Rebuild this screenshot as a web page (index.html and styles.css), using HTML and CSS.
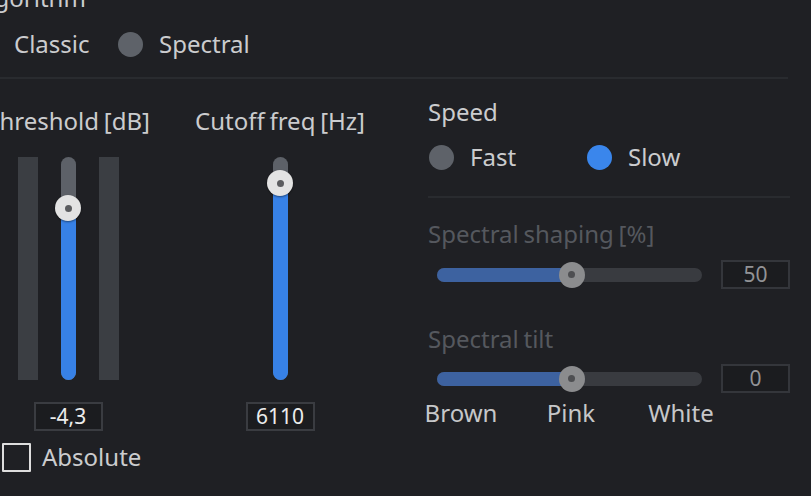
FILE: index.html
```html
<!DOCTYPE html>
<html lang="en">
<head>
<meta charset="utf-8">
<title>Noise reduction</title>
<link rel="stylesheet" href="styles.css">
</head>
<body>
<div class="panel">
  <section class="algo">
    <div class="label">Algorithm</div>
    <div class="radios algo-radios">
      <div class="radio"><span class="dot"></span>Classic</div>
      <div class="radio"><span class="dot"></span>Spectral</div>
    </div>
  </section>
  <div class="divider wide"></div>
  <div class="main">
    <div class="left">
      <div class="faders">
        <div class="fader-col">
          <div class="label nowrap">Threshold [dB]</div>
          <div class="fader-area">
            <div class="meter"></div>
            <div class="vtrack">
              <div class="vfill" style="height:172px"></div>
              <div class="vthumb" style="bottom:159px"></div>
            </div>
            <div class="meter"></div>
          </div>
          <div class="valbox">-4,3</div>
        </div>
        <div class="fader-col">
          <div class="label nowrap">Cutoff freq [Hz]</div>
          <div class="fader-area">
            <div class="vtrack">
              <div class="vfill" style="height:197px"></div>
              <div class="vthumb" style="bottom:184px"></div>
            </div>
          </div>
          <div class="valbox">6110</div>
        </div>
      </div>
      <div class="check"><span class="cbox"></span>Absolute</div>
    </div>
    <div class="right">
      <div class="label">Speed</div>
      <div class="radios speed-radios">
        <div class="radio"><span class="dot"></span>Fast</div>
        <div class="radio"><span class="dot on"></span>Slow</div>
      </div>
      <div class="divider"></div>
      <div class="label dim first-dim">Spectral shaping [%]</div>
      <div class="hrow">
        <div class="htrack">
          <div class="hfill" style="width:50.8%"></div>
          <div class="hthumb" style="left:50.8%"></div>
        </div>
        <div class="valbox dimbox">50</div>
      </div>
      <div class="label dim second-dim">Spectral tilt</div>
      <div class="hrow tight">
        <div class="htrack">
          <div class="hfill" style="width:50.8%"></div>
          <div class="hthumb" style="left:50.8%"></div>
        </div>
        <div class="valbox dimbox">0</div>
      </div>
      <div class="ticks">
        <span>Brown</span><span>Pink</span><span>White</span>
      </div>
    </div>
  </div>
</div>
</body>
</html>
```

FILE: styles.css
```css
html, body {
  margin: 0;
  padding: 0;
}
body {
  background: #1f2024;
  font-family: "Noto Sans", "Open Sans", sans-serif;
  font-size: 24px;
  line-height: 32px;
  word-spacing: -1.5px;
  color: #cbccce;
  width: 811px;
  height: 496px;
  overflow: hidden;
}
.panel {
  margin-left: -27px;
  position: relative;
  top: -18px;
}
.label {
  height: 32px;
}
.nowrap {
  white-space: nowrap;
}
.radios {
  display: grid;
}
.algo-radios {
  grid-template-columns: 145px auto;
  margin-top: 14px;
}
.radio {
  display: flex;
  align-items: center;
  gap: 16px;
  height: 32px;
}
.dot {
  flex: none;
  width: 25px;
  height: 25px;
  border-radius: 50%;
  background: #5e6269;
}
.dot.on {
  background: #3a86ec;
}
.divider {
  height: 2px;
  background: #292b2f;
}
.divider.wide {
  width: 815px;
  margin-top: 17px;
}
.main {
  display: flex;
}
.left {
  width: 455px;
  padding-top: 26px;
}
.right {
  width: 362px;
  padding-top: 17px;
}
.faders {
  display: grid;
  grid-template-columns: 190px 234px;
}
.fader-col {
  display: flex;
  flex-direction: column;
  align-items: center;
}
.fader-area {
  display: flex;
  gap: 23px;
  height: 223px;
  margin-top: 20px;
}
.meter {
  width: 20px;
  background: #3b3e43;
}
.vtrack {
  position: relative;
  width: 15px;
  border-radius: 8px;
  background: #5d6168;
}
.vfill {
  position: absolute;
  left: 0;
  right: 0;
  bottom: 0;
  background: #3781e6;
  border-radius: 0 0 8px 8px;
}
.vthumb,
.hthumb {
  position: absolute;
  width: 26px;
  height: 26px;
  border-radius: 50%;
  display: flex;
  align-items: center;
  justify-content: center;
}
.vthumb {
  left: 50%;
  margin-left: -13px;
  background: #e3e3e3;
  box-shadow: 0 1px 2px rgba(0, 0, 0, 0.45);
}
.vthumb::after,
.hthumb::after {
  content: "";
  width: 7px;
  height: 7px;
  border-radius: 50%;
  background: #5b5c5f;
}
.valbox {
  box-sizing: border-box;
  width: 69px;
  height: 29px;
  margin-top: 22px;
  border: 2px solid #3a3c41;
  background: #1b1c1f;
  font-size: 21px;
  line-height: 25px;
  text-align: center;
  color: #ececec;
}
.check {
  display: flex;
  align-items: center;
  gap: 11px;
  height: 32px;
  margin-top: 10px;
  margin-left: 29px;
}
.cbox {
  box-sizing: border-box;
  width: 29px;
  height: 29px;
  border: 2px solid #dedede;
  border-radius: 1px;
}
.speed-radios {
  grid-template-columns: 158px auto;
  margin-top: 13px;
  padding-left: 1px;
}
.right .divider {
  margin-top: 23px;
}
.dim {
  color: #55585e;
}
.first-dim {
  margin-top: 20px;
}
.second-dim {
  margin-top: 34px;
}
.hrow {
  display: flex;
  align-items: center;
  gap: 19px;
  height: 29px;
  margin-top: 10px;
  padding-left: 9px;
}
.hrow.tight {
  margin-top: 9px;
}
.hrow .valbox {
  margin-top: 0;
}
.htrack {
  position: relative;
  width: 266px;
  height: 14px;
  border-radius: 7px;
  background: #393b40;
}
.hfill {
  position: absolute;
  left: 0;
  top: 0;
  bottom: 0;
  border-radius: 7px 0 0 7px;
  background: #3d62a0;
}
.hthumb {
  top: 50%;
  margin-top: -13px;
  margin-left: -13px;
  background: #8b8c8e;
}
.hthumb::after {
  background: #4e4f52;
}
.dimbox {
  color: #929396;
  border-color: #34363b;
}
.ticks {
  display: grid;
  grid-template-columns: repeat(3, 110px);
  margin-left: -22px;
  margin-top: 4px;
  text-align: center;
  color: #c6c7c9;
}
```
